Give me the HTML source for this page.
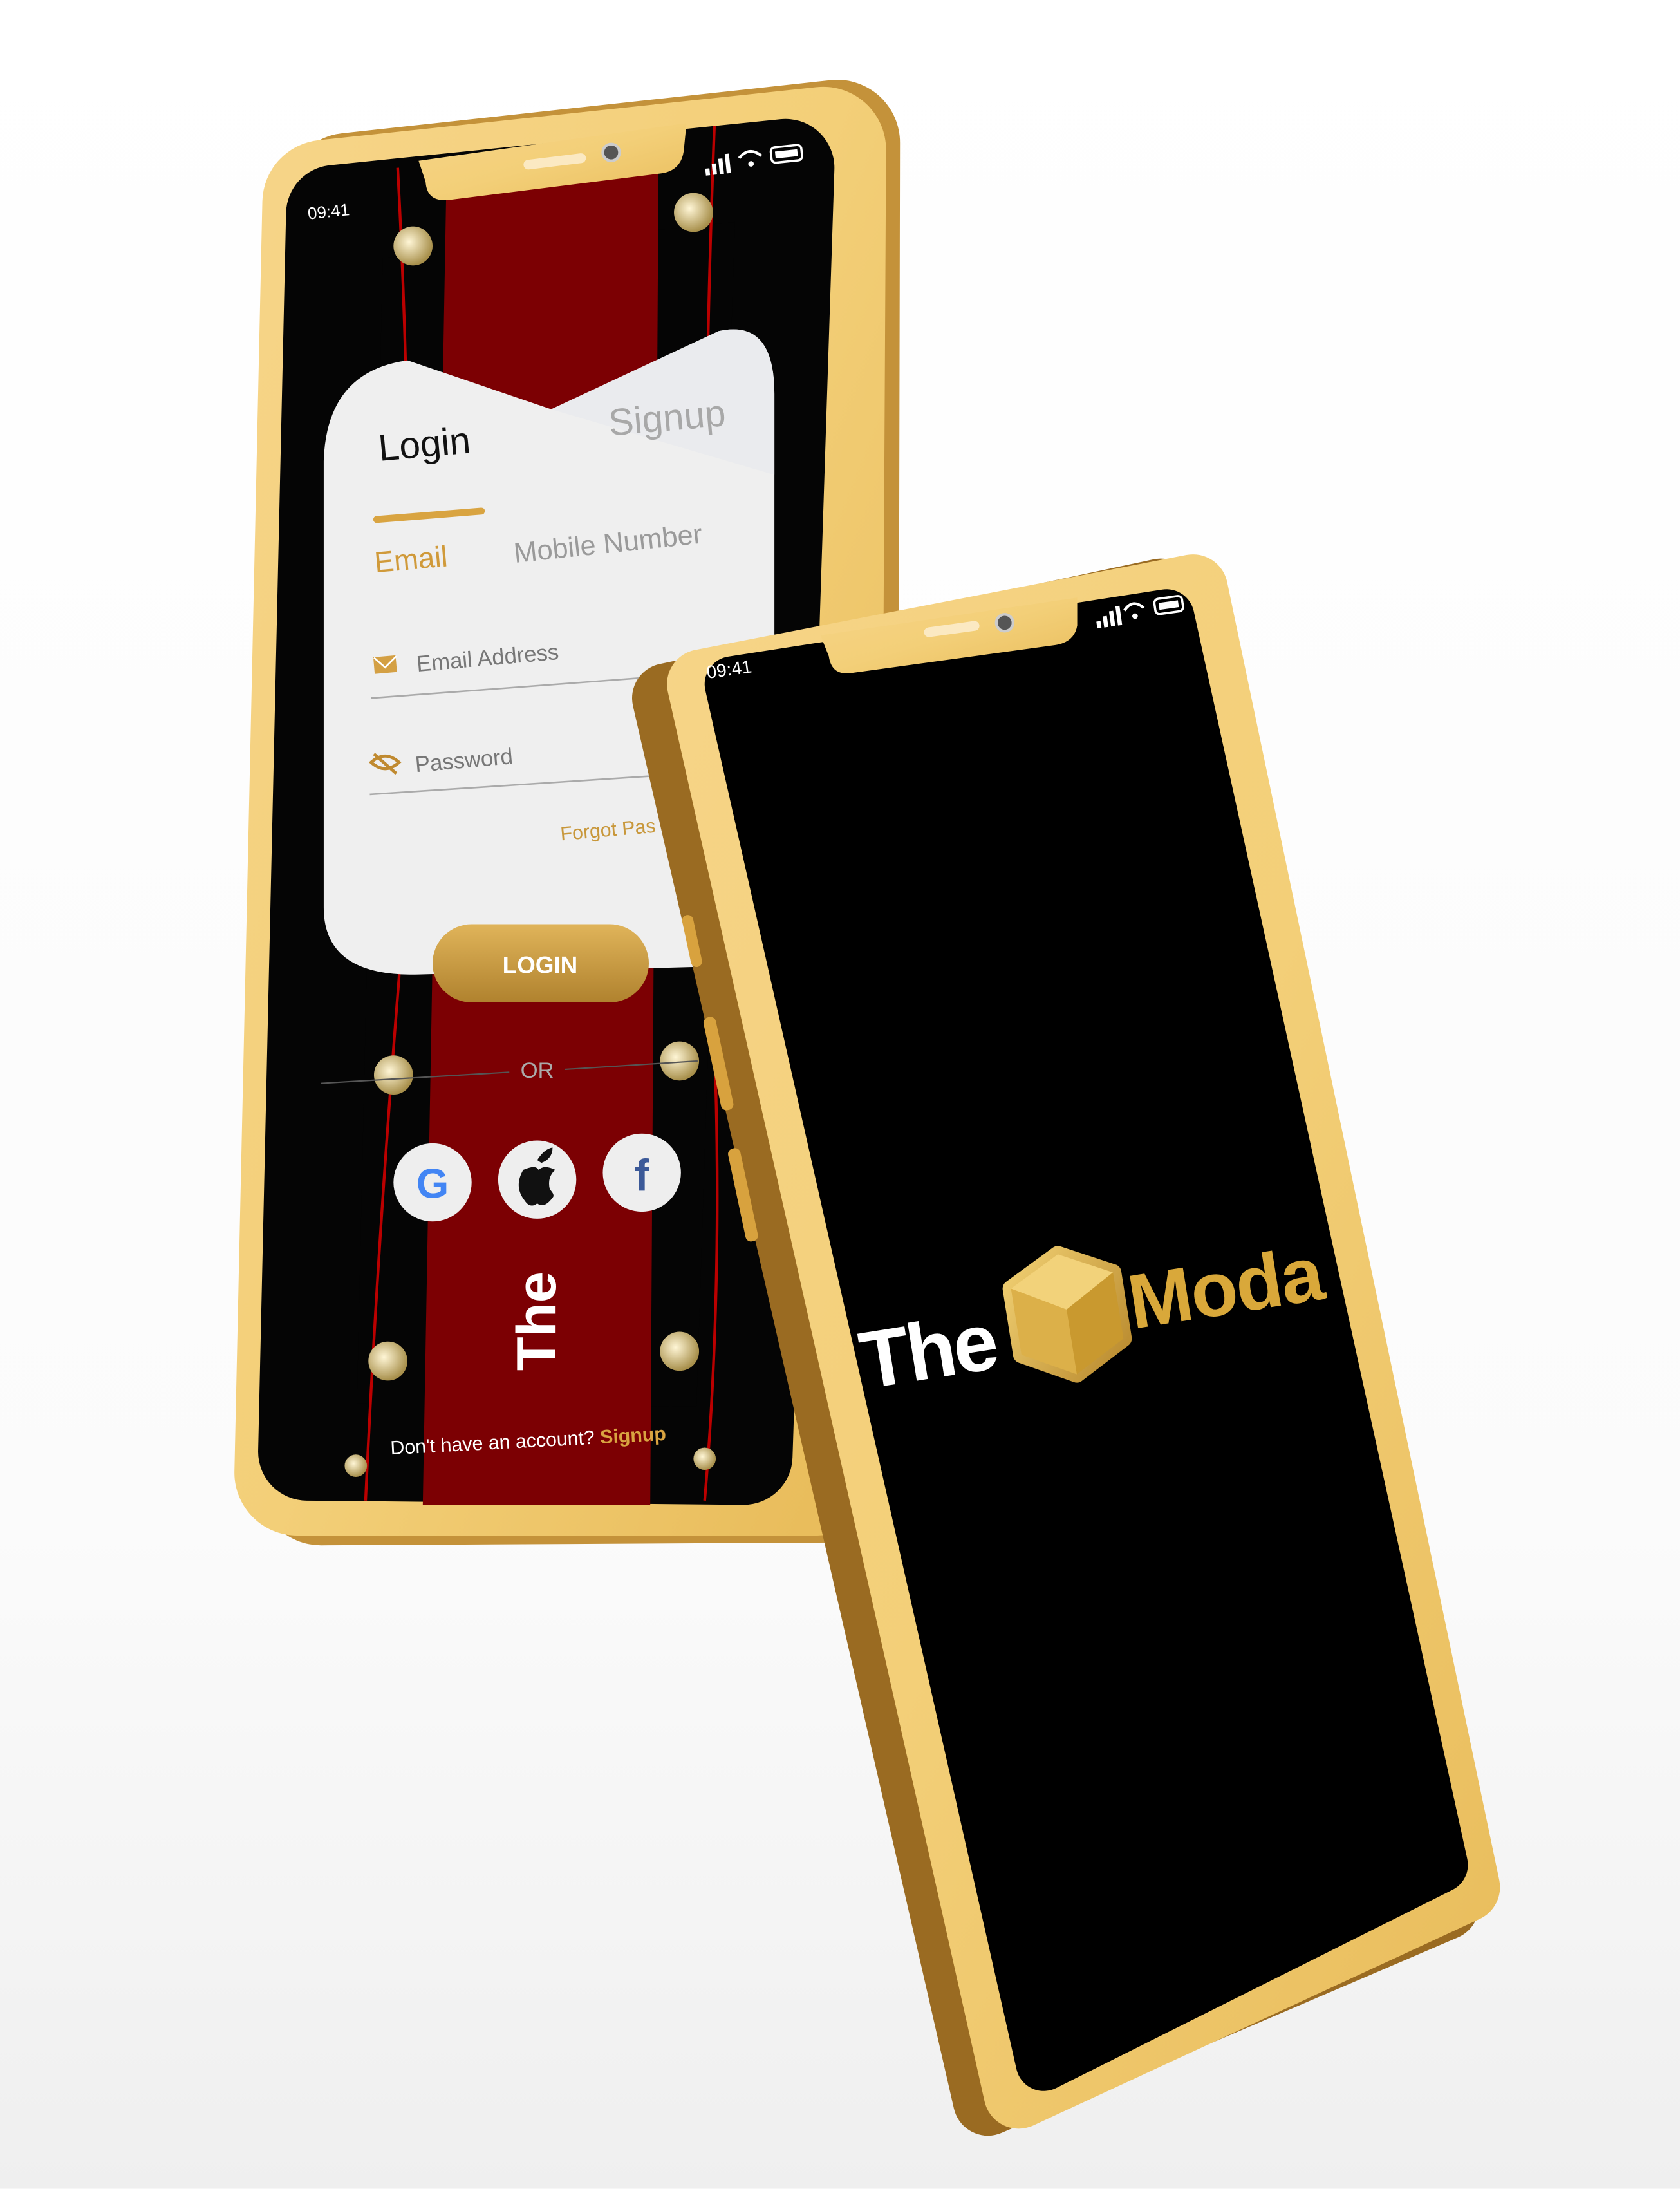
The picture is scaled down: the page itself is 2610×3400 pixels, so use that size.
<!DOCTYPE html>
<html><head><meta charset="utf-8"><style>
html,body{margin:0;padding:0;background:#fff;}
svg{display:block;}
text{font-family:"Liberation Sans",sans-serif;}
</style></head><body>
<svg width="2610" height="3400" viewBox="0 0 1204 1568" xmlns="http://www.w3.org/2000/svg">
<defs>
<linearGradient id="bg" x1="0" y1="0" x2="0" y2="1"><stop offset="0" stop-color="#ffffff"/><stop offset="0.7" stop-color="#fbfbfb"/><stop offset="1" stop-color="#efefef"/></linearGradient>
<linearGradient id="gold" x1="0" y1="0" x2="1" y2="1"><stop offset="0" stop-color="#f6d487"/><stop offset="0.5" stop-color="#f3cf78"/><stop offset="1" stop-color="#e9bd5c"/></linearGradient>
<linearGradient id="side" x1="0" y1="0" x2="1" y2="0"><stop offset="0" stop-color="#8a5e1c"/><stop offset="0.5" stop-color="#d4a449"/><stop offset="1" stop-color="#a87a2a"/></linearGradient>
<linearGradient id="btn" x1="0" y1="0" x2="0" y2="1"><stop offset="0" stop-color="#e0b45a"/><stop offset="1" stop-color="#b0822e"/></linearGradient>
<linearGradient id="cube" x1="0" y1="0" x2="1" y2="1"><stop offset="0" stop-color="#f0cf72"/><stop offset="1" stop-color="#b98a2e"/></linearGradient>
<radialGradient id="pin" cx="0.4" cy="0.4" r="0.6"><stop offset="0" stop-color="#fff6d6"/><stop offset="1" stop-color="#a8904c"/></radialGradient>
</defs>
<rect width="1204" height="1568" fill="url(#bg)"/>

<!-- BACK PHONE -->
<polygon points="250,140 600,102 598,1060 230,1062" fill="#c4923a" stroke="#c4923a" stroke-width="90" stroke-linejoin="round"/>
<polygon points="233,145 590,107 585,1055 213,1055" fill="url(#gold)" stroke="url(#gold)" stroke-width="90" stroke-linejoin="round"/>
<polygon points="240,153 563,120 533,1043 220,1040" fill="#050505" stroke="#050505" stroke-width="70" stroke-linejoin="round"/>
<polygon points="320,125 472,110 466,1078 303,1078" fill="#7c0003"/>
<path d="M285,120 Q300,400 286,700 Q270,900 262,1075" stroke="#b00" stroke-width="2" fill="none"/>
<path d="M512,90 Q500,400 510,700 Q520,900 505,1075" stroke="#b00" stroke-width="2" fill="none"/>
<g fill="url(#pin)">
<circle cx="296" cy="176" r="14"/><circle cx="497" cy="152" r="14"/>
<circle cx="282" cy="770" r="14"/><circle cx="487" cy="760" r="14"/>
<circle cx="278" cy="975" r="14"/><circle cx="487" cy="968" r="14"/>
<circle cx="255" cy="1050" r="8"/><circle cx="505" cy="1045" r="8"/>
</g>
<path d="M300,115 L492,88 L490,108 Q488,122 474,124 L322,143 Q306,145 305,130 Z" fill="url(#gold)"/>
<rect x="375" y="112" width="45" height="7" rx="3.5" fill="#fbe9c2" transform="rotate(-7 397 115)"/>
<circle cx="438" cy="109" r="6" fill="#555" stroke="#ccc" stroke-width="2"/>
<text x="221" y="157" font-size="12" fill="#fff" transform="rotate(-6 221 157)">09:41</text>
<g fill="#fff" transform="rotate(-6 540 115)">
<rect x="505" y="117" width="3" height="5"/><rect x="510" y="114" width="3" height="8"/><rect x="515" y="111" width="3" height="11"/><rect x="520" y="108" width="3" height="14"/>
<rect x="553" y="107" width="22" height="11" rx="3" fill="none" stroke="#fff" stroke-width="1.6"/><rect x="556" y="110" width="16" height="5"/>
<path d="M530,112 Q538,104 546,112" stroke="#fff" stroke-width="2" fill="none"/><circle cx="538" cy="117" r="2"/>
</g>
<path d="M232,330 Q234,266 292,258 L395,293 L515,237 Q555,228 555,282 L555,650 Q555,690 520,692 L300,698 Q232,700 232,650 Z" fill="#efefef"/>
<path d="M395,293 L515,237 Q555,228 555,282 L555,340 Z" fill="#e6e8ec" opacity="0.6"/>
<text x="272" y="330" font-size="27" fill="#111" transform="rotate(-5 272 330)">Login</text>
<text x="437" y="312" font-size="27" fill="#a8a8a8" transform="rotate(-5 437 312)">Signup</text>
<line x1="270" y1="372" x2="345" y2="366" stroke="#d9a441" stroke-width="5" stroke-linecap="round"/>
<text x="269" y="410" font-size="21" fill="#d09a3a" transform="rotate(-5 269 410)">Email</text>
<text x="369" y="403" font-size="20" fill="#9a9a9a" transform="rotate(-6 369 403)">Mobile Number</text>
<rect x="268" y="470" width="16" height="12" fill="#d4a044" transform="rotate(-5 276 476)"/>
<path d="M268,471 L276,478 L284,470" stroke="#fff" stroke-width="1.2" fill="none"/>
<text x="299" y="481" font-size="16" fill="#777" transform="rotate(-5 299 481)">Email Address</text>
<line x1="266" y1="500" x2="480" y2="484" stroke="#aaa" stroke-width="1.2"/>
<path d="M266,546 Q276,537 286,546 Q276,555 266,546 Z M268,540 L284,554" stroke="#c08a30" stroke-width="2.2" fill="none"/>
<text x="298" y="553" font-size="16" fill="#777" transform="rotate(-5 298 553)">Password</text>
<line x1="265" y1="569" x2="480" y2="555" stroke="#aaa" stroke-width="1.2"/>
<text x="402" y="602" font-size="14" fill="#c8973a" transform="rotate(-5 402 602)">Forgot Pas</text>
<rect x="310" y="662" width="155" height="56" rx="28" fill="url(#btn)"/>
<text x="387" y="697" font-size="17" font-weight="bold" fill="#fff" text-anchor="middle">LOGIN</text>
<line x1="230" y1="776" x2="365" y2="768" stroke="#555" stroke-width="1"/>
<line x1="405" y1="766" x2="500" y2="760" stroke="#555" stroke-width="1"/>
<text x="385" y="772" font-size="16" fill="#aaa" text-anchor="middle">OR</text>
<circle cx="310" cy="847" r="28" fill="#eeeeee"/>
<text x="310" y="858" font-size="30" font-weight="bold" fill="#4285f4" text-anchor="middle">G</text>
<circle cx="385" cy="845" r="28" fill="#eeeeee"/>
<path d="M385,831 Q390,823 396,822 Q396,830 388,833 Z M375,838 Q384,834 386,838 Q390,834 398,838 Q392,843 394,852 Q398,856 396,858 Q390,866 385,862 Q380,866 376,860 Q368,850 375,838 Z" fill="#111"/>
<circle cx="460" cy="840" r="28" fill="#eeeeee"/>
<text x="460" y="853" font-size="32" font-weight="bold" fill="#3b5998" text-anchor="middle">f</text>
<text x="0" y="0" font-size="40" font-weight="bold" fill="#fff" transform="translate(398,982) rotate(-90)">The</text>
<text x="280" y="1042" font-size="14" fill="#fff" transform="rotate(-3 280 1042)">Don't have an account? <tspan fill="#d9a441" font-weight="bold">Signup</tspan></text>

<!-- FRONT PHONE -->
<polygon points="478,500 832,425 1035,1365 708,1505" fill="url(#side)" stroke="#9a6b22" stroke-width="50" stroke-linejoin="round"/>
<polygon points="503,490 855,422 1050,1352 730,1500" fill="url(#gold)" stroke="url(#gold)" stroke-width="50" stroke-linejoin="round"/>
<rect x="492" y="655" width="8" height="38" rx="4" fill="#d8a23e" transform="rotate(-12 496 674)"/>
<rect x="510" y="728" width="9" height="68" rx="4" fill="#d8a23e" transform="rotate(-12 514 760)"/>
<rect x="528" y="822" width="9" height="68" rx="4" fill="#d8a23e" transform="rotate(-12 532 856)"/>
<polygon points="525,490 836,442 1032,1336 748,1478" fill="#000" stroke="#000" stroke-width="40" stroke-linejoin="round"/>
<path d="M588,455 L772,428 L772,448 Q770,460 756,462 L610,482 Q596,484 594,470 Z" fill="url(#gold)"/>
<rect x="662" y="447" width="40" height="7" rx="3.5" fill="#fbe9c2" transform="rotate(-8 682 450)"/>
<circle cx="720" cy="446" r="6" fill="#555" stroke="#ccc" stroke-width="2"/>
<text x="507" y="486" font-size="13" fill="#fff" transform="rotate(-8 507 486)">09:41</text>
<g fill="#fff" transform="rotate(-8 815 438)">
<rect x="785" y="441" width="3" height="5"/><rect x="790" y="438" width="3" height="8"/><rect x="795" y="435" width="3" height="11"/><rect x="800" y="432" width="3" height="14"/>
<rect x="828" y="431" width="20" height="11" rx="3" fill="none" stroke="#fff" stroke-width="1.6"/><rect x="831" y="434" width="14" height="5"/>
<path d="M806,436 Q813,428 820,436" stroke="#fff" stroke-width="2" fill="none"/><circle cx="813" cy="441" r="2"/>
</g>
<!-- logo -->
<text x="620" y="995" font-size="58" font-weight="bold" fill="#fff" letter-spacing="-2" transform="rotate(-9 620 995)">The</text>
<g transform="rotate(-9 765 942)">
<polygon points="765,898 802,917 802,965 765,985 728,965 728,917" fill="url(#cube)" stroke="url(#cube)" stroke-width="12" stroke-linejoin="round"/>
<polygon points="765,898 802,917 765,938 728,917" fill="#f2d27a"/>
<polygon points="765,938 802,917 802,965 765,985" fill="#c9992f"/>
<polygon points="728,917 765,938 765,985 728,965" fill="#dcb049"/>
</g>
<text x="812" y="952" font-size="55" font-weight="bold" fill="#d9a83a" letter-spacing="-1" transform="rotate(-9 812 952)">Moda</text>
</svg>
</body></html>
